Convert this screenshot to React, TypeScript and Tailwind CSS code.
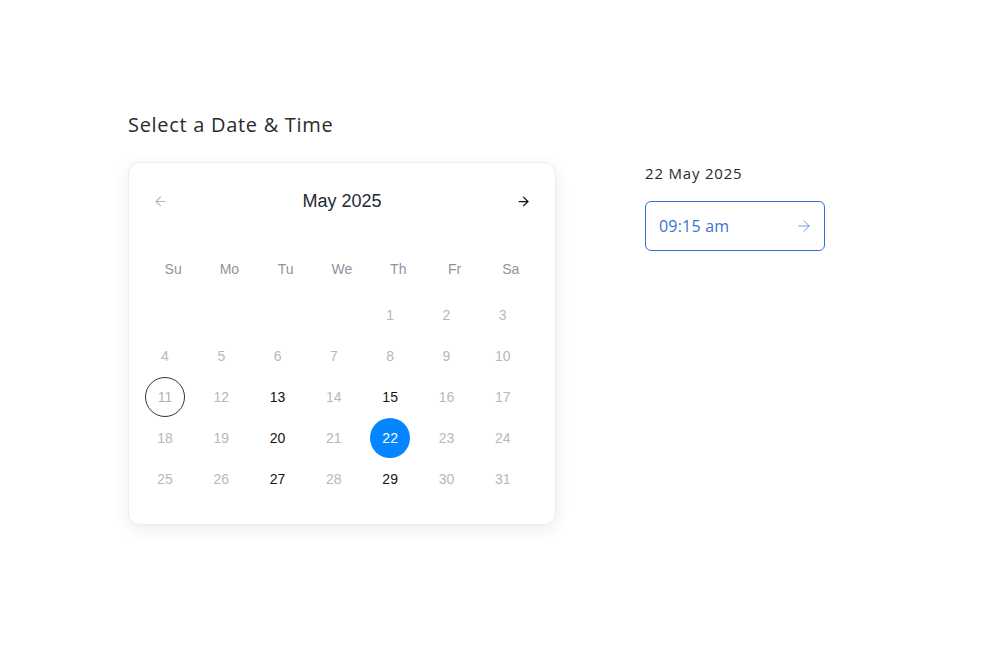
import React, { useState } from "react";
import { ArrowLeft, ArrowRight } from "lucide-react";

const weekDays = ["Su", "Mo", "Tu", "We", "Th", "Fr", "Sa"];
const available = [13, 15, 20, 22, 27, 29];

const Calendar: React.FC<{ selected: number; onSelect: (d: number) => void }> = ({
  selected,
  onSelect,
}) => {
  const cells: (number | null)[] = [null, null, null, null];
  for (let d = 1; d <= 31; d++) cells.push(d);

  return (
    <div className="w-[428px] rounded-xl border border-[#ececec] bg-white px-[16px] pt-[26px] pb-[25px] shadow-[0_4px_16px_rgba(0,0,0,0.08)] font-['Liberation_Sans',Arial,sans-serif]">
      <div className="flex h-[24px] items-center justify-between px-[8px]">
        <button className="text-[#b5b5b5]">
          <ArrowLeft size={15} strokeWidth={1.8} />
        </button>
        <span className="text-[18px] text-[#1f2a37]">May 2025</span>
        <button className="text-[#111]">
          <ArrowRight size={15} strokeWidth={2} />
        </button>
      </div>

      <div className="mt-[36px] grid grid-cols-7">
        {weekDays.map((w) => (
          <div key={w} className="flex h-[40px] items-center justify-center text-[14px] text-[#8f949b]">
            {w}
          </div>
        ))}
      </div>

      <div className="mt-[6px] grid grid-cols-7 gap-y-[1px]">
        {cells.map((d, i) => {
          if (d === null) return <div key={`e${i}`} className="h-[40px]" />;
          const isSel = d === selected;
          const isToday = d === 11;
          const isAvail = available.includes(d);
          return (
            <div key={d} className="h-[40px]">
              <button
                onClick={() => isAvail && onSelect(d)}
                className={`flex h-[40px] w-[40px] items-center justify-center rounded-full text-[14px] ${
                  isSel
                    ? "bg-[#0585ff] text-white"
                    : isToday
                    ? "border border-[#333] text-[#b3b3b3]"
                    : isAvail
                    ? "text-[#151515]"
                    : "text-[#b8b8b8]"
                }`}
              >
                {d}
              </button>
            </div>
          );
        })}
      </div>
    </div>
  );
};

export default function App() {
  const [selected, setSelected] = useState(22);

  return (
    <div className="min-h-screen bg-white pl-[128px] pt-[108px] font-['Open_Sans',sans-serif]">
      <div className="flex items-start gap-[89px]">
        <div>
          <h1 className="mt-[3px] mb-[23px] text-[20px] leading-[28px] tracking-[0.7px] text-[#2b2b2b]">
            Select a Date &amp; Time
          </h1>
          <Calendar selected={selected} onSelect={setSelected} />
        </div>
        <div className="pt-[54px]">
          <p className="text-[15px] leading-[22px] tracking-[0.8px] text-[#2b2b2b]">{selected} May 2025</p>
          <button className="mt-[17px] flex h-[50px] w-[180px] items-center justify-between rounded-md border border-[#2f6fd8] pl-[13px] pr-[11px] text-[#3a72d6]">
            <span className="text-[16px] tracking-[0.2px]">09:15 am</span>
            <ArrowRight size={18} strokeWidth={1.3} className="text-[#6d95e0]" />
          </button>
        </div>
      </div>
    </div>
  );
}
